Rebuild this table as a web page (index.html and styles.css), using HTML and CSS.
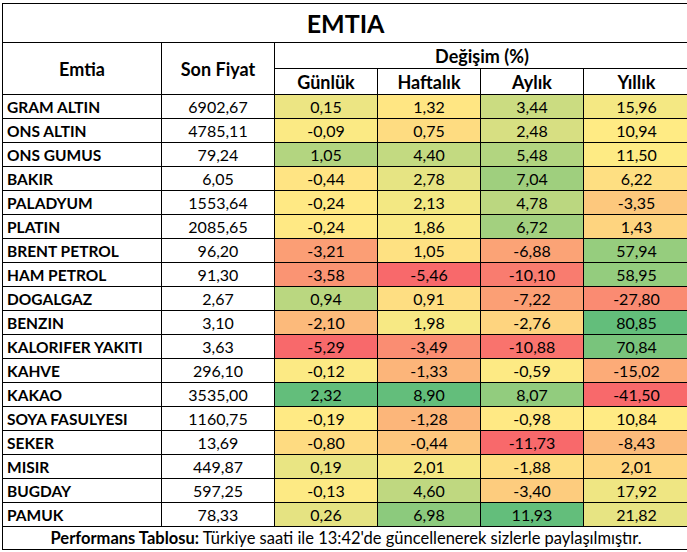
FILE: index.html
```html
<!DOCTYPE html>
<html lang="tr">
<head>
<meta charset="utf-8">
<title>EMTIA</title>
<link rel="stylesheet" href="styles.css">
</head>
<body>
<div class="sheet">
<table class="grid">
<colgroup>
<col class="c-name"><col class="c-price"><col class="c-val"><col class="c-val"><col class="c-val"><col class="c-last">
</colgroup>
<thead>
<tr class="r-title"><th colspan="6" class="title">EMTIA</th></tr>
<tr class="r-h1"><th rowspan="2" class="hd">Emtia</th><th rowspan="2" class="hd">Son Fiyat</th><th colspan="4" class="hd end">Değişim (%)</th></tr>
<tr class="r-h2"><th class="hd">Günlük</th><th class="hd">Haftalık</th><th class="hd">Aylık</th><th class="hd end">Yıllık</th></tr>
</thead>
<tbody>
<tr><td class="nm">GRAM ALTIN</td><td>6902,67</td><td>0,15</td><td>1,32</td><td>3,44</td><td class="end">15,96</td></tr>
<tr><td class="nm">ONS ALTIN</td><td>4785,11</td><td>-0,09</td><td>0,75</td><td>2,48</td><td class="end">10,94</td></tr>
<tr><td class="nm">ONS GUMUS</td><td>79,24</td><td>1,05</td><td>4,40</td><td>5,48</td><td class="end">11,50</td></tr>
<tr><td class="nm">BAKIR</td><td>6,05</td><td>-0,44</td><td>2,78</td><td>7,04</td><td class="end">6,22</td></tr>
<tr><td class="nm">PALADYUM</td><td>1553,64</td><td>-0,24</td><td>2,13</td><td>4,78</td><td class="end">-3,35</td></tr>
<tr><td class="nm">PLATIN</td><td>2085,65</td><td>-0,24</td><td>1,86</td><td>6,72</td><td class="end">1,43</td></tr>
<tr><td class="nm">BRENT PETROL</td><td>96,20</td><td>-3,21</td><td>1,05</td><td>-6,88</td><td class="end">57,94</td></tr>
<tr><td class="nm">HAM PETROL</td><td>91,30</td><td>-3,58</td><td>-5,46</td><td>-10,10</td><td class="end">58,95</td></tr>
<tr><td class="nm">DOGALGAZ</td><td>2,67</td><td>0,94</td><td>0,91</td><td>-7,22</td><td class="end">-27,80</td></tr>
<tr><td class="nm">BENZIN</td><td>3,10</td><td>-2,10</td><td>1,98</td><td>-2,76</td><td class="end">80,85</td></tr>
<tr><td class="nm">KALORIFER YAKITI</td><td>3,63</td><td>-5,29</td><td>-3,49</td><td>-10,88</td><td class="end">70,84</td></tr>
<tr><td class="nm">KAHVE</td><td>296,10</td><td>-0,12</td><td>-1,33</td><td>-0,59</td><td class="end">-15,02</td></tr>
<tr><td class="nm">KAKAO</td><td>3535,00</td><td>2,32</td><td>8,90</td><td>8,07</td><td class="end">-41,50</td></tr>
<tr><td class="nm">SOYA FASULYESI</td><td>1160,75</td><td>-0,19</td><td>-1,28</td><td>-0,98</td><td class="end">10,84</td></tr>
<tr><td class="nm">SEKER</td><td>13,69</td><td>-0,80</td><td>-0,44</td><td>-11,73</td><td class="end">-8,43</td></tr>
<tr><td class="nm">MISIR</td><td>449,87</td><td>0,19</td><td>2,01</td><td>-1,88</td><td class="end">2,01</td></tr>
<tr><td class="nm">BUGDAY</td><td>597,25</td><td>-0,13</td><td>4,60</td><td>-3,40</td><td class="end">17,92</td></tr>
<tr><td class="nm">PAMUK</td><td>78,33</td><td>0,26</td><td>6,98</td><td>11,93</td><td class="end">21,82</td></tr>
</tbody>
<tfoot>
<tr class="r-foot"><td colspan="6" class="foot end"><b>Performans Tablosu:</b> Türkiye saati ile 13:42'de güncellenerek sizlerle paylaşılmıştır.</td></tr>
</tfoot>
</table>
</div>
<script src="script.js"></script>
</body>
</html>
```
FILE: styles.css
```css
html, body {
  margin: 0;
  background: #fff;
}
body {
  font-family: Lato, "Liberation Sans", sans-serif;
  color: #000;
}
.sheet {
  padding: 3px 0 0 2px;
}
.grid {
  border-collapse: separate;
  border-spacing: 0;
  table-layout: fixed;
  width: 686px;
  border-left: 1px solid #000;
  border-top: 1px solid #000;
}
.c-name { width: 159px; }
.c-price { width: 113px; }
.c-val { width: 103px; }
.c-last { width: 105px; }
.grid th, .grid td {
  border-right: 1px solid #000;
  border-bottom: 1px solid #000;
  padding: 0;
  text-align: center;
  vertical-align: middle;
  white-space: nowrap;
  overflow: hidden;
}
.grid .end {
  border-right: none;
}
.r-title { height: 39px; }
.r-h1 { height: 26px; }
.r-h2 { height: 26px; }
.grid tbody tr { height: 24px; }
.r-foot { height: 23px; }
.title {
  font-size: 25px;
  font-weight: 700;
  padding-top: 1px;
}
.hd {
  font-size: 18px;
  font-weight: 700;
}
.grid tbody td {
  font-size: 16px;
  line-height: 18px;
  padding-top: 1px;
}
.grid tbody td.nm {
  text-align: left;
  padding-left: 4px;
  font-size: 15.5px;
  font-weight: 700;
}
.foot {
  font-size: 16.5px;
  line-height: 18px;
}
```
FILE: script.js
```js
(function () {
  var RED = [248, 105, 107], YEL = [255, 235, 132], GRN = [99, 190, 123];
  function mix(a, b, t) {
    return a.map(function (v, i) { return Math.round(v + (b[i] - v) * t); });
  }
  var rows = Array.prototype.slice.call(document.querySelectorAll('.grid tbody tr'));
  for (var c = 2; c < 6; c++) {
    var cells = rows.map(function (r) { return r.children[c]; });
    var vals = cells.map(function (td) { return parseFloat(td.textContent.replace(',', '.')); });
    var s = vals.slice().sort(function (a, b) { return a - b; });
    var min = s[0], max = s[s.length - 1];
    var pos = (s.length - 1) * 0.5, lo = Math.floor(pos), hi = Math.ceil(pos);
    var mid = s[lo] + (s[hi] - s[lo]) * (pos - lo);
    cells.forEach(function (td, i) {
      var v = vals[i], col;
      if (v <= mid) col = mix(RED, YEL, (v - min) / (mid - min));
      else col = mix(YEL, GRN, (v - mid) / (max - mid));
      td.style.backgroundColor = 'rgb(' + col.join(',') + ')';
    });
  }
})();
```
